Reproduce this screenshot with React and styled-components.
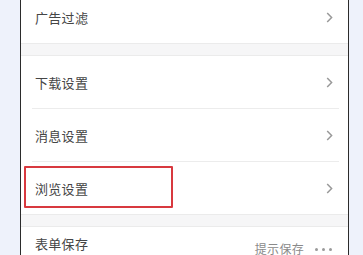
import React from "react";
import styled, { createGlobalStyle } from "styled-components";

const GlobalStyle = createGlobalStyle`
  html, body {
    margin: 0;
    padding: 0;
    background: #eef2fb;
    overflow: hidden;
  }
  body {
    font-family: "Noto Sans CJK SC", "Noto Sans", sans-serif;
  }
`;

const Screen = styled.div`
  width: 363px;
  height: 255px;
  overflow: hidden;
  background: #eef2fb;
`;

const Panel = styled.div`
  margin: -9px 0 0 20px;
  width: 327px;
  border-left: 1px solid #2b2b2b;
  border-right: 1px solid #2b2b2b;
  background: #ffffff;
`;

const Group = styled.div`
  background: #ffffff;
`;

const Gap = styled.div`
  height: 11px;
  background: #f6f6f7;
  border-top: 1px solid #ebebeb;
  border-bottom: 1px solid #ebebeb;
`;

const Row = styled.div`
  position: relative;
  display: flex;
  align-items: center;
  justify-content: space-between;
  height: 52px;
  padding: 0 15px 0 14px;
`;

const Divider = styled.div`
  height: 1px;
  background: #ececec;
  margin: 0 9px 0 11px;
`;

const Label = styled.span`
  font-size: 13px;
  color: #454545;
  letter-spacing: 0.3px;
`;

const Chevron = styled.svg`
  width: 7px;
  height: 11px;
  flex-shrink: 0;
`;

const Highlight = styled.div`
  position: absolute;
  left: 3px;
  top: 4px;
  width: 145px;
  height: 38px;
  border: 2px solid #d8393f;
  border-radius: 1px;
  pointer-events: none;
`;

const TopRow = styled.div`
  display: flex;
  align-items: flex-start;
  justify-content: space-between;
  height: 60px;
  padding: 7px 15px 0 14px;
`;

const Side = styled.div`
  display: flex;
  align-items: center;
  gap: 11px;
  margin-top: 8px;
`;

const Value = styled.span`
  font-size: 12px;
  line-height: 14px;
  color: #8a8a8a;
  letter-spacing: 0.3px;
`;

const Dots = styled.span`
  display: flex;
  gap: 4px;
  padding-right: 1px;

  i {
    width: 3px;
    height: 3px;
    border-radius: 50%;
    background: #9a9a9a;
  }
`;

function Arrow() {
  return (
    <Chevron viewBox="0 0 7 11">
      <path d="M1.2 1 L5.6 5.5 L1.2 10" fill="none" stroke="#999999" strokeWidth="1.5" />
    </Chevron>
  );
}

function SettingRow({ label, marked }) {
  return (
    <Row>
      <Label>{label}</Label>
      <Arrow />
      {marked && <Highlight />}
    </Row>
  );
}

export default function App() {
  return (
    <Screen>
      <GlobalStyle />
      <Panel>
        <Group>
          <SettingRow label="广告过滤" />
        </Group>
        <Gap />
        <Group>
          <SettingRow label="下载设置" />
          <Divider />
          <SettingRow label="消息设置" />
          <Divider />
          <SettingRow label="浏览设置" marked />
        </Group>
        <Gap />
        <Group>
          <TopRow>
            <Label>表单保存</Label>
            <Side>
              <Value>提示保存</Value>
              <Dots>
                <i />
                <i />
                <i />
              </Dots>
            </Side>
          </TopRow>
        </Group>
      </Panel>
    </Screen>
  );
}
